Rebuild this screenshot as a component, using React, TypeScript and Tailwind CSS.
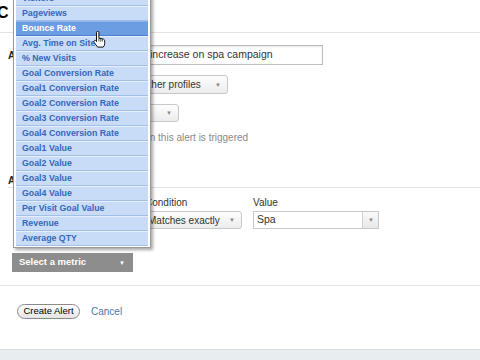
import React from "react";

const metrics = [
  "Visitors",
  "Pageviews",
  "Bounce Rate",
  "Avg. Time on Site",
  "% New Visits",
  "Goal Conversion Rate",
  "Goal1 Conversion Rate",
  "Goal2 Conversion Rate",
  "Goal3 Conversion Rate",
  "Goal4 Conversion Rate",
  "Goal1 Value",
  "Goal2 Value",
  "Goal3 Value",
  "Goal4 Value",
  "Per Visit Goal Value",
  "Revenue",
  "Average QTY",
];

function SelectBox({ width, text, pl }: { width: string; text?: string; pl?: string }) {
  return (
    <div
      className={`flex h-full items-center justify-between rounded-[3px] border border-[#c8c8c8] bg-gradient-to-b from-[#fdfdfd] to-[#ececec] pr-[5px] text-[10px] text-[#333] ${width} ${pl ?? "pl-[3px]"}`}
    >
      <span className="whitespace-nowrap">{text}</span>
      <span className="scale-75 text-[8px] leading-none text-[#888]">▼</span>
    </div>
  );
}

function MetricMenu() {
  return (
    <div className="absolute left-[13px] top-[-11px] w-[138px] border border-[#9a9a9a] bg-white px-[2px] py-[1px] shadow-[2px_2px_3px_rgba(0,0,0,0.35)]">
      {metrics.map((m) => {
        const active = m === "Bounce Rate";
        return (
          <div
            key={m}
            className={`flex h-[15px] items-center border-b border-t pl-[6px] text-[8.8px] font-bold whitespace-nowrap ${
              active
                ? "border-t-[#8db4ec] border-b-[#4d80cc] bg-[#6c9de3] text-white"
                : "border-t-[#e4eefc] border-b-[#a3bfe6] bg-[#c8dcf7] text-[#3567b8]"
            }`}
          >
            {m}
          </div>
        );
      })}
    </div>
  );
}

function HandCursor() {
  return (
    <svg
      className="absolute left-[92px] top-[31px]"
      width="14"
      height="18"
      viewBox="0 0 14 18"
    >
      <path
        d="M4.5 1.6a1.2 1.2 0 0 1 2.4 0V7.2l4.2.8c1 .2 1.6 1 1.6 2V12.6c0 1.5-.6 2.6-1.5 3.5H5.6L2.2 11.5c-.5-.7-.3-1.6.4-2 .6-.3 1.3-.1 1.7.4L4.5 10.6z"
        fill="#fff"
        stroke="#111"
        strokeWidth="1"
        strokeLinejoin="round"
      />
      <path d="M6.9 7.5v3M8.7 7.8v2.8M10.4 8.2v2.4" stroke="#111" strokeWidth="0.7" />
    </svg>
  );
}

export default function App() {
  return (
    <div className="relative h-[360px] w-[480px] overflow-hidden bg-white font-['Liberation_Sans',Arial,sans-serif] text-[#333]">
      {/* page header, mostly hidden behind the open menu */}
      <div className="h-[33px] border-b border-[#e3e3e3] pt-[3px]">
        <h1 className="-ml-[3px] whitespace-nowrap text-[16px] font-bold leading-[20px] text-black">
          C<span className="ml-[8px]">reate an Alert</span>
        </h1>
      </div>

      {/* alert settings */}
      <div className="flex flex-col pl-[8px] pt-[12px]">
        <div className="grid h-[20px] grid-cols-[132px_auto]">
          <div className="pt-[5px] text-[10px] font-bold leading-[12px] text-[#222]">Alert name:</div>
          <div className="flex h-[20px] w-[183px] items-center border border-[#bdbdbd] pl-[9px] text-[10.5px] text-[#333] shadow-[inset_0_1px_2px_rgba(0,0,0,0.1)]">
            increase on spa campaign
          </div>
        </div>
        <div className="mt-[10px] grid h-[19px] grid-cols-[132px_auto]">
          <div className="pl-[14px] text-[10px] font-bold leading-[19px] text-[#222]">Apply to:</div>
          <SelectBox width="w-[88px]" text="other profiles" pl="pl-[2px]" />
        </div>
        <div className="mt-[10px] grid h-[18px] grid-cols-[132px_auto]">
          <div className="pl-[14px] text-[10px] font-bold leading-[18px] text-[#222]">Period:</div>
          <SelectBox width="w-[39px]" />
        </div>
        <div className="mt-[10px] h-[12px] whitespace-nowrap pl-[40px] text-[10px] leading-[12px] text-[#8a8a8a]">
          Send me an email when this alert is triggered
        </div>
        <div className="mt-[31px] h-[13px] border-b border-[#e3e3e3] text-[10px] font-bold leading-[12px] text-[#222]">
          Alert Conditions
        </div>
      </div>

      {/* conditions */}
      <div className="border-b border-[#e3e3e3] pb-[13px] pt-[9px]">
        <div className="grid h-[12px] grid-cols-[140px_113px_auto] text-[10px] leading-[12px] text-[#333]">
          <div className="pl-[14px]">Metric</div>
          <div className="pl-[5px]">Condition</div>
          <div>Value</div>
        </div>
        <div className="mt-[2px] grid h-[18px] grid-cols-[140px_113px_auto]">
          <div />
          <SelectBox width="w-[102px]" text="Matches exactly" pl="pl-[7px]" />
          <div className="flex h-[18px] w-[126px] border border-[#c8c8c8]">
            <div className="flex flex-1 items-center pl-[3px] text-[10.5px] text-[#333]">Spa</div>
            <div className="flex w-[16px] items-center justify-center border-l border-[#d0d0d0] bg-gradient-to-b from-[#fafafa] to-[#e8e8e8]">
              <span className="scale-75 text-[8px] leading-none text-[#888]">▼</span>
            </div>
          </div>
        </div>
        <div className="ml-[12px] mt-[24px] flex h-[19px] w-[121px] items-center justify-between bg-[#8d8d8d] pl-[7px] pr-[7px]">
          <span className="text-[9.5px] font-bold text-white">Select a metric</span>
          <span className="scale-75 text-[8px] leading-none text-white">▼</span>
        </div>
      </div>

      {/* actions */}
      <div className="flex items-center gap-[11px] border-b border-[#d9d9d9] pb-[30px] pl-[17px] pt-[18px]">
        <button className="flex h-[15px] w-[63px] items-center justify-center rounded-full border border-[#8a8a8a] bg-gradient-to-b from-white to-[#e4e4e4] text-[9.5px] text-black">
          Create Alert
        </button>
        <span className="text-[10px] text-[#4a78a8]">Cancel</span>
      </div>
      <div className="h-[20px] bg-[#e8eef0]" />

      <MetricMenu />
      <HandCursor />
    </div>
  );
}
